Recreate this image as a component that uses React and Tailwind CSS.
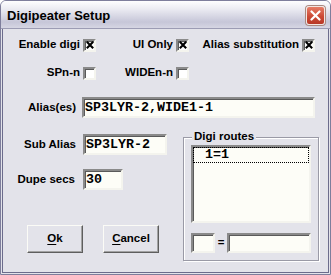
import clsx from 'clsx';

const label = "font-['Liberation_Sans',Arial,sans-serif] font-bold text-[11.5px] leading-none text-black";
const mono = "font-['Liberation_Mono','Courier_New',monospace] font-bold text-[13.33px] leading-none text-black";
const sunken = 'border-2 border-t-[#8a8a8a] border-l-[#8a8a8a] border-b-[#f4f4ee] border-r-[#f4f4ee] bg-[#fdfdf7] shadow-[inset_1px_1px_0_#5a5a5a]';

function CheckBox({ checked }) {
  return (
    <span className={clsx('flex h-[13px] w-[13px] shrink-0 items-center justify-center', sunken, 'bg-white')}>
      {checked ? (
        <svg width="8" height="8" viewBox="0 0 8 8">
          <path d="M0.8 0.8 L7.2 7.2 M7.2 0.8 L0.8 7.2" stroke="#000" strokeWidth="2.1" />
        </svg>
      ) : null}
    </span>
  );
}

function CheckItem({ text, checked, width }) {
  return (
    <div className={clsx('flex items-center justify-end gap-[3px]', width)}>
      <span className={label}>{text}</span>
      <CheckBox checked={checked} />
    </div>
  );
}

function TextBox({ value, className }) {
  return (
    <div className={clsx('flex h-[21px] items-center pl-[1px]', sunken, className)}>
      <span className={mono}>{value}</span>
    </div>
  );
}

function Button({ first, rest }) {
  return (
    <button
      className={clsx(
        'flex h-[28px] w-[56px] items-center justify-center border border-t-[#fbfbf6] border-l-[#fbfbf6] border-b-[#5e5e5e] border-r-[#5e5e5e] bg-[#e3e3ea] shadow-[inset_-1px_-1px_0_#a3a3a3]',
        label
      )}
    >
      <span>
        <span className="underline underline-offset-2">{first}</span>
        {rest}
      </span>
    </button>
  );
}

export default function App() {
  return (
    <div className="flex h-[275px] w-[331px] flex-col overflow-hidden rounded-t-[6px] border border-[#7e7e9c] bg-[#e3e3ea]">
      <div className="flex h-[28px] shrink-0 items-center justify-between border-b border-[#9c9cb4] bg-[linear-gradient(to_bottom,#fefeff_0%,#ebebf2_30%,#c6c6d8_78%,#d6d6e3_100%)] pl-[6px] pr-[5px] pt-[2px]">
        <span className="font-['Liberation_Sans',Arial,sans-serif] text-[13px] font-bold text-black">Digipeater Setup</span>
        <div className="flex h-[19px] w-[19px] items-center justify-center rounded-[3px] border border-[#f2e6e2] bg-[linear-gradient(to_bottom,#e67e68,#cc4a36_55%,#b83826)] shadow-[0_0_0_1px_#a9887f]">
          <svg width="11" height="11" viewBox="0 0 11 11">
            <path d="M1.5 1.5 L9.5 9.5 M9.5 1.5 L1.5 9.5" stroke="#fff" strokeWidth="2.2" strokeLinecap="round" />
          </svg>
        </div>
      </div>

      <div className="mx-[1px] mb-[1px] flex flex-1 flex-col border-x border-b border-[#6c6c8c] bg-[#e3e3ea] pt-[9px]">
        <div className="flex h-[14px] items-center">
          <CheckItem text="Enable digi" checked width="w-[93px]" />
          <CheckItem text="UI Only" checked width="w-[93px]" />
          <CheckItem text="Alias substitution" checked width="w-[126px]" />
        </div>
        <div className="mt-[14px] flex h-[14px] items-center">
          <CheckItem text="SPn-n" width="w-[93px]" />
          <CheckItem text="WIDEn-n" width="w-[93px]" />
        </div>

        <div className="mt-[17px] flex items-center">
          <span className={clsx('w-[73px] text-right', label)}>Alias(es)</span>
          <TextBox value="SP3LYR-2,WIDE1-1" className="ml-[6px] w-[233px]" />
        </div>

        <div className="mt-[16px] flex">
          <div className="flex w-[180px] flex-col">
            <div className="flex items-center">
              <span className={clsx('w-[73px] text-right', label)}>Sub Alias</span>
              <TextBox value="SP3LYR-2" className="ml-[7px] w-[84px]" />
            </div>
            <div className="mt-[14px] flex items-center">
              <span className={clsx('w-[72px] text-right', label)}>Dupe secs</span>
              <TextBox value="30" className="ml-[8px] w-[40px]" />
            </div>
            <div className="ml-[24px] mt-[35px] flex gap-[20px]">
              <Button first="O" rest="k" />
              <Button first="C" rest="ancel" />
            </div>
          </div>

          <div className="relative mt-[3px] flex h-[124px] w-[136px] flex-col border border-[#9a9aa6] px-[7px] pt-[7px] shadow-[inset_1px_1px_0_#fff,1px_1px_0_#fff]">
            <span className={clsx('absolute left-[8px] top-[-7px] bg-[#e3e3ea] px-[2px]', label)}>Digi routes</span>
            <div className={clsx('h-[78px] w-[120px]', sunken)}>
              <div className="flex h-[16px] items-center border border-dotted border-black pl-[11px]">
                <span className={mono}>1=1</span>
              </div>
            </div>
            <div className="mt-[10px] flex items-center">
              <div className={clsx('h-[20px] w-[24px]', sunken)} />
              <span className={clsx('w-[12px] text-center', label)}>=</span>
              <div className={clsx('h-[20px] w-[84px]', sunken)} />
            </div>
          </div>
        </div>
      </div>
    </div>
  );
}
